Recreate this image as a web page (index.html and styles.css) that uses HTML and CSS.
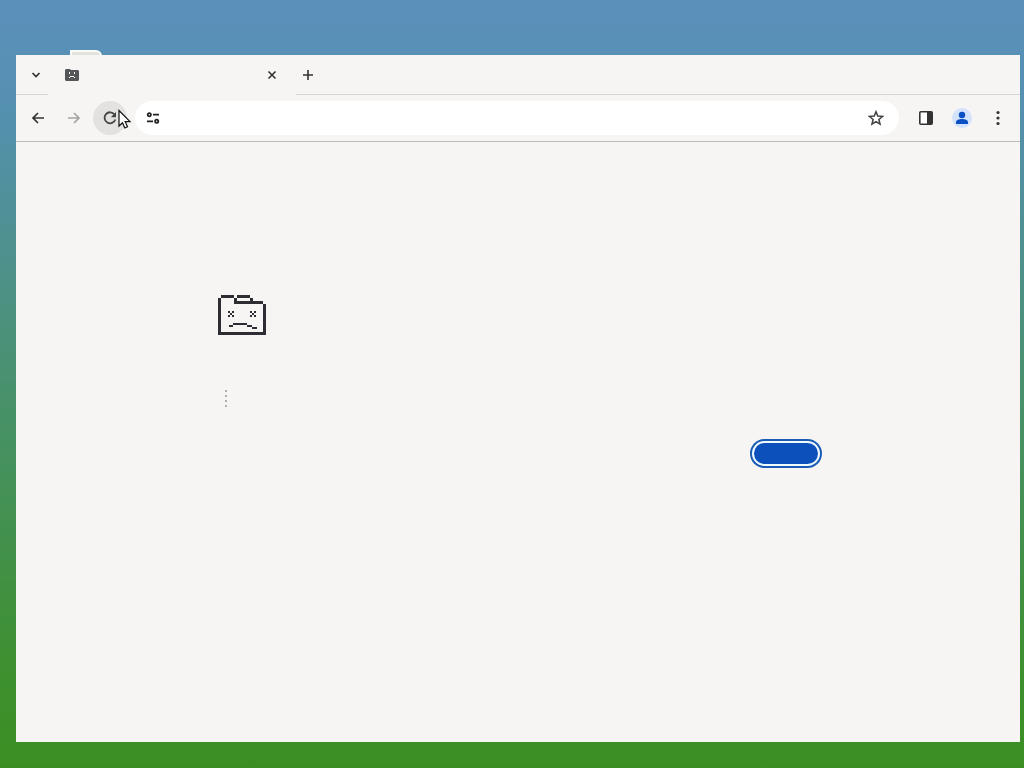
FILE: index.html
```html
<!DOCTYPE html>
<html lang="en">
<head>
  <meta charset="utf-8">
  <title>Browser</title>
  <link rel="stylesheet" href="styles.css">
</head>
<body>
  <div class="desktop-icon"></div>

  <div class="window">
    <div class="tabstrip">
      <div class="tab-search">
        <button aria-label="Search tabs">
          <svg width="16" height="16" viewBox="0 0 16 16"><path d="M4.500 6L8 9.500 11.500 6" fill="none" stroke="#333" stroke-width="1.700"/></svg>
        </button>
      </div>
      <div class="tab">
        <svg width="14" height="12" viewBox="0 0 14 12">
          <path d="M1 0h4l1 1h7l1 1v9l-1 1H1l-1-1V1z" fill="#55565a"/>
          <path d="M4 3h1v2H4zM9 3h1v2H9zM5 7h4v1H5zM4 8h1v1H4zM9 8h1v1H9z" fill="#fff"/>
        </svg>
        <button aria-label="Close tab">
          <svg width="16" height="16" viewBox="0 0 16 16"><path d="M4.500 4.500l7 7M11.500 4.500l-7 7" stroke="#333" stroke-width="1.600"/></svg>
        </button>
      </div>
      <div class="tab-rest">
        <button aria-label="New tab">
          <svg width="16" height="16" viewBox="0 0 16 16"><path d="M8 3v10M3 8h10" stroke="#333" stroke-width="1.600"/></svg>
        </button>
      </div>
    </div>

    <div class="toolbar">
      <button class="nav" aria-label="Back">
        <svg width="16" height="16" viewBox="0 0 16 16"><path d="M14 8H3.500M8 3L3 8l5 5" fill="none" stroke="#333" stroke-width="1.700"/></svg>
      </button>
      <button class="nav" aria-label="Forward">
        <svg width="16" height="16" viewBox="0 0 16 16"><path d="M2 8h10.500M8 3l5 5-5 5" fill="none" stroke="#a3a3a1" stroke-width="1.700"/></svg>
      </button>
      <button class="nav reload" aria-label="Reload">
        <svg width="16" height="16" viewBox="0 0 16 16">
          <path d="M12.500 4.500A5.500 5.500 0 1 0 13.300 9.500" fill="none" stroke="#444" stroke-width="1.800"/>
          <path d="M14 2v5.200H8.800z" fill="#444"/>
        </svg>
      </button>
      <div class="omnibox">
        <button aria-label="Site information">
          <svg width="14" height="14" viewBox="0 0 14 14" fill="none" stroke="#222" stroke-width="1.800">
            <circle cx="3.300" cy="3.700" r="1.600"/><path d="M7 3.700h6M1 10.300h6"/><circle cx="10.700" cy="10.300" r="1.600"/>
          </svg>
        </button>
        <input type="text" aria-label="Address">
        <button aria-label="Bookmark">
          <svg width="16" height="16" viewBox="0 0 16 16"><path d="M8 1.800l1.800 4.300 4.700.4-3.600 3 1.100 4.600L8 11.600l-4 2.500 1.100-4.600-3.600-3 4.700-.4z" fill="none" stroke="#444" stroke-width="1.600"/></svg>
        </button>
      </div>
      <button class="nav" aria-label="Side panel">
        <svg width="16" height="16" viewBox="0 0 16 16"><rect x="1.800" y="1.800" width="12.400" height="12.400" rx="1" fill="#fff" stroke="#333" stroke-width="1.600"/><path d="M9 2h5v12H9z" fill="#333"/></svg>
      </button>
      <button class="nav" aria-label="Profile">
        <svg width="20" height="20" viewBox="0 0 20 20">
          <circle cx="10" cy="10" r="10" fill="#d3e3fd"/>
          <circle cx="10" cy="7" r="3.200" fill="#0b4fc4"/>
          <path d="M4 16v-1.800c0-2 3-3.200 6-3.200s6 1.200 6 3.200V16z" fill="#0b4fc4"/>
        </svg>
      </button>
      <button class="nav" aria-label="Menu">
        <svg width="16" height="16" viewBox="0 0 16 16" fill="#333"><circle cx="8" cy="2.500" r="1.600"/><circle cx="8" cy="8" r="1.600"/><circle cx="8" cy="13.500" r="1.600"/></svg>
      </button>
    </div>

    <div class="page">
      <div class="error">
        <!-- sad folder -->
        <svg width="48" height="40" viewBox="0 0 48 40" fill="#2d2d33" shape-rendering="crispEdges">
          <path d="M3 0h13v3H3zM19 0h13v3H19zM16 3h3v3h26v3H16zM32 3h3v3h-3zM0 3h3v34h42V9h3v31H0z"/>
          <path d="M10 16h2v2h-2zM14 16h2v2h-2zM12 18h2v2h-2zM10 20h2v2h-2zM14 20h2v2h-2z"/>
          <path d="M32 16h2v2h-2zM36 16h2v2h-2zM34 18h2v2h-2zM32 20h2v2h-2zM36 20h2v2h-2z"/>
          <path d="M15 28h14v2H15zM11 30h4v2h-4zM29 30h5v2h-5zM34 32h5v2h-5z"/>
        </svg>
        <ul>
          <li></li>
          <li></li>
          <li></li>
          <li></li>
        </ul>
        <div class="buttons">
          <button class="primary" aria-label="Reload page"></button>
        </div>
      </div>
    </div>
  </div>

  <svg class="cursor" width="14" height="21" viewBox="0 0 14 21"><path d="M1 1.500v15.500l3.500-3.300 2.300 5.300 2.700-1.200-2.300-5.100H12z" fill="#fff" stroke="#111" stroke-width="1.200"/></svg>
</body>
</html>
```
FILE: styles.css
```css
html {
  height: 100%;
}
body {
  margin: 0;
  height: 100%;
  overflow: hidden;
  font-family: "Liberation Sans", sans-serif;
  background: linear-gradient(#5b90bb 0%, #5590b2 13%, #48916a 52%, #3e9030 87%, #3b8f22 100%);
}
button {
  display: flex;
  align-items: center;
  justify-content: center;
  padding: 0;
  border: none;
  background: none;
}

/* desktop */
.desktop-icon {
  position: absolute;
  left: 70px;
  top: 50px;
  width: 32px;
  height: 20px;
  box-sizing: border-box;
  border: 2px solid #fafaf8;
  border-radius: 0 6px 0 0;
  background: #e2e2de;
}
.window {
  position: absolute;
  top: 55px;
  right: 4px;
  bottom: 26px;
  left: 16px;
  display: flex;
  flex-direction: column;
  background: #f6f5f4;
}
.cursor {
  position: absolute;
  left: 118px;
  top: 109px;
}

/* tabs */
.tabstrip {
  display: flex;
  height: 40px;
}
.tab-search, .tab-rest {
  display: flex;
  align-items: center;
  border-bottom: 1px solid #d8d6d4;
}
.tab-search {
  width: 32px;
}
.tab-search button {
  margin-left: 12px;
}
.tab {
  display: flex;
  align-items: center;
  justify-content: space-between;
  width: 215px;
  padding: 0 16px 0 17px;
}
.tab-rest {
  flex: 1;
  padding-left: 4px;
}

/* toolbar */
.toolbar {
  display: flex;
  align-items: center;
  gap: 2px;
  height: 46px;
  padding: 0 5px;
  border-bottom: 1px solid #bebab7;
}
.nav {
  width: 34px;
  height: 34px;
  border-radius: 50%;
}
.reload {
  background: #e3e2e1;
}
.omnibox {
  display: flex;
  align-items: center;
  flex: 1;
  height: 34px;
  margin: 0 8px 0 6px;
  padding: 0 15px 0 11px;
  border-radius: 17px;
  background: #fff;
}
.omnibox input {
  flex: 1;
  min-width: 0;
  margin: 0 8px;
  border: none;
  outline: none;
  background: none;
}

/* error page */
.page {
  flex: 1;
  padding: 153px 24px 0;
}
.error {
  max-width: 600px;
  margin: 0 auto;
}
.error > svg {
  display: block;
}
.error ul {
  display: flex;
  flex-direction: column;
  gap: 3px;
  margin: 55px 0 0;
  padding: 0 0 0 7px;
  list-style: none;
}
.error li {
  width: 2px;
  height: 2px;
  background: #b0afae;
}
.buttons {
  display: flex;
  justify-content: flex-end;
  margin-top: 36px;
}
.primary {
  width: 64px;
  height: 21px;
  border-radius: 11px;
  background: #0b50bb;
  box-shadow: 0 0 0 2px #f0fbff, 0 0 0 4px #1a5cb5;
}
```
